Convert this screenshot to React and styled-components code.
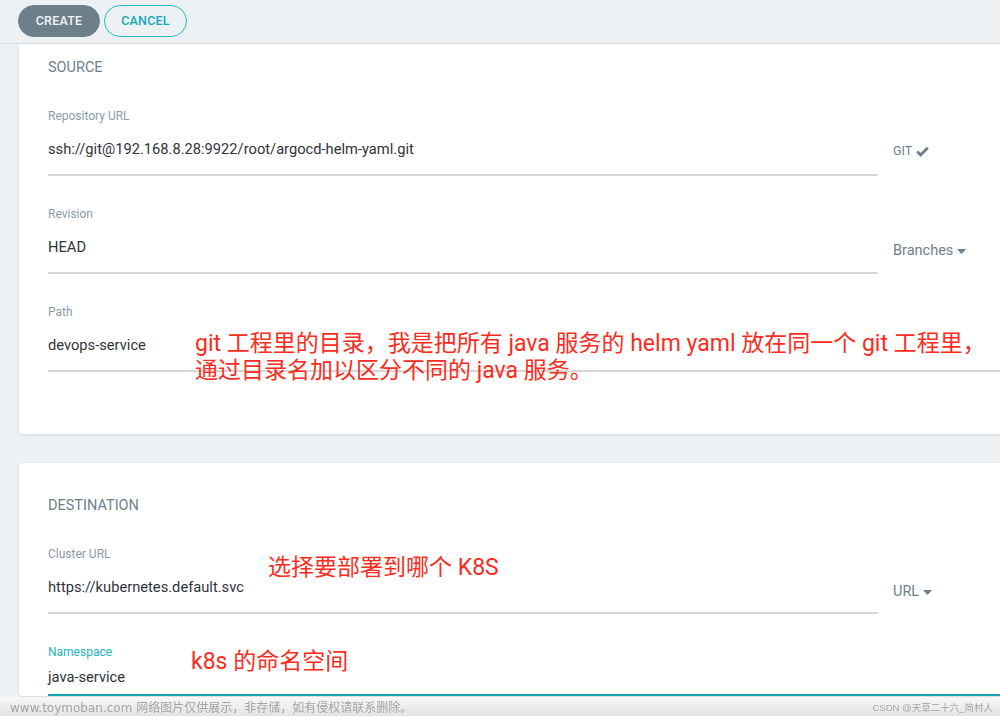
import React from "react";
import styled, { createGlobalStyle } from "styled-components";

const GlobalStyle = createGlobalStyle`
  html, body {
    margin: 0;
    padding: 0;
    background: #eef1f4;
    overflow: hidden;
    font-family: Roboto, "Liberation Sans", sans-serif;
  }
`;

const Header = styled.div`
  height: 44px;
  border-bottom: 1px solid #d8dde2;
  background: #eef1f4;
  display: flex;
  align-items: center;
  gap: 4px;
  padding-left: 18px;
  padding-bottom: 2px;
  box-sizing: border-box;
`;

const Button = styled.button`
  height: 32px;
  width: ${(p) => p.$width}px;
  border-radius: 16px;
  font-family: Roboto, "Liberation Sans", sans-serif;
  font-weight: 500;
  font-size: 12.5px;
  letter-spacing: 0.2px;
  text-transform: uppercase;
  cursor: pointer;
  background: ${(p) => (p.$primary ? "#6d7f8b" : "transparent")};
  color: ${(p) => (p.$primary ? "#f1f4f6" : "#12a8b8")};
  border: 1px solid ${(p) => (p.$primary ? "#6d7f8b" : "#22bccc")};
`;

const Page = styled.div`
  padding-left: 19px;
`;

const Card = styled.div`
  position: relative;
  width: 1010px;
  background: #fff;
  border-radius: ${(p) => (p.$cut ? "0 0 4px 4px" : "4px")};
  box-shadow: 0 1px 3px rgba(0, 0, 0, 0.12);
  padding: ${(p) => p.$top}px 0 ${(p) => p.$bottom}px 29px;
  margin-bottom: 29px;
  box-sizing: border-box;
`;

const SectionTitle = styled.div`
  font-size: 14.5px;
  line-height: 18px;
  color: #6d7f8b;
  text-transform: uppercase;
  margin-bottom: 31px;
`;

const FieldRow = styled.div`
  position: relative;
  display: flex;
  align-items: flex-start;
  margin-bottom: 30px;
`;

const Field = styled.div`
  width: ${(p) => (p.$full ? "981px" : "830px")};
  border-bottom: 2px solid ${(p) => (p.$active ? "#18a5b4" : "#d6d6d6")};
`;

const Label = styled.div`
  font-size: 12px;
  line-height: 16px;
  color: ${(p) => (p.$active ? "#22b3c2" : "#8a9ba8")};
  margin-bottom: ${(p) => (p.$active ? 7 : 15)}px;
`;

const Value = styled.div`
  font-size: 14.7px;
  line-height: 20px;
  color: #2f333b;
  padding-bottom: ${(p) => (p.$active ? 7 : 15)}px;
`;

const Addon = styled.div`
  margin-left: 15px;
  margin-top: ${(p) => p.$offset}px;
  display: flex;
  align-items: center;
  gap: 4px;
  font-size: ${(p) => (p.$small ? 12.5 : 14.5)}px;
  line-height: 18px;
  color: #6d7f8b;
  text-transform: ${(p) => (p.$small ? "uppercase" : "none")};
`;

const Note = styled.div`
  position: absolute;
  left: ${(p) => p.$left}px;
  top: ${(p) => p.$top}px;
  font-family: Roboto, "Noto Sans CJK SC", sans-serif;
  font-size: 23px;
  line-height: 27px;
  color: #fb2c1d;
  white-space: nowrap;
  pointer-events: none;
`;

const Watermark = styled.div`
  position: fixed;
  left: 0;
  right: 0;
  bottom: 0;
  height: 19px;
  display: flex;
  align-items: center;
  justify-content: space-between;
  padding: 0 7px 0 10px;
  background: linear-gradient(to bottom, rgba(248, 248, 248, 0.92), rgba(226, 226, 226, 0.92));
  color: #a3a3a3;
  font-family: "DejaVu Sans", "Noto Sans CJK SC", sans-serif;
`;

const WaterLeft = styled.span`
  font-size: 12px;
`;

const WaterRight = styled.span`
  font-family: "Liberation Sans", "Noto Sans CJK SC", sans-serif;
  font-size: 9.5px;
`;

const Check = () => (
  <svg width="13" height="11" viewBox="0 0 13 11">
    <path d="M1.2 5.6 L4.6 9 L11.8 1.8" fill="none" stroke="#6d7f8b" strokeWidth="2.8" />
  </svg>
);

const Caret = () => (
  <svg width="9" height="5" viewBox="0 0 9 5">
    <path d="M0 0 L9 0 L4.5 5 Z" fill="#6d7f8b" />
  </svg>
);

const FormField = ({ label, value, active, full, addon, children }) => (
  <FieldRow>
    <Field $full={full} $active={active}>
      <Label $active={active}>{label}</Label>
      <Value $active={active}>{value}</Value>
    </Field>
    {addon}
    {children}
  </FieldRow>
);

export default function App() {
  return (
    <>
      <GlobalStyle />
      <Header>
        <Button $primary $width={82}>Create</Button>
        <Button $width={83}>Cancel</Button>
      </Header>
      <Page>
        <Card $cut $top={15} $bottom={32}>
          <SectionTitle>Source</SectionTitle>
          <FormField
            label="Repository URL"
            value="ssh://git@192.168.8.28:9922/root/argocd-helm-yaml.git"
            addon={
              <Addon $small $offset={34}>
                GIT <Check />
              </Addon>
            }
          />
          <FormField
            label="Revision"
            value="HEAD"
            addon={
              <Addon $offset={36}>
                Branches <Caret />
              </Addon>
            }
          />
          <FormField label="Path" value="devops-service" full>
            <Note $left={147} $top={26}>
              git 工程里的目录，我是把所有 java 服务的 helm yaml 放在同一个 git 工程里，
              <br />
              通过目录名加以区分不同的 java 服务。
            </Note>
          </FormField>
        </Card>
        <Card $top={34} $bottom={0}>
          <SectionTitle>Destination</SectionTitle>
          <FormField
            label="Cluster URL"
            value="https://kubernetes.default.svc"
            addon={
              <Addon $offset={37}>
                URL <Caret />
              </Addon>
            }
          >
            <Note $left={220} $top={8}>选择要部署到哪个 K8S</Note>
          </FormField>
          <FormField label="Namespace" value="java-service" active full>
            <Note $left={143} $top={4}>k8s 的命名空间</Note>
          </FormField>
        </Card>
      </Page>
      <Watermark>
        <WaterLeft>www.toymoban.com 网络图片仅供展示，非存储，如有侵权请联系删除。</WaterLeft>
        <WaterRight>CSDN @天草二十六_简村人</WaterRight>
      </Watermark>
    </>
  );
}
